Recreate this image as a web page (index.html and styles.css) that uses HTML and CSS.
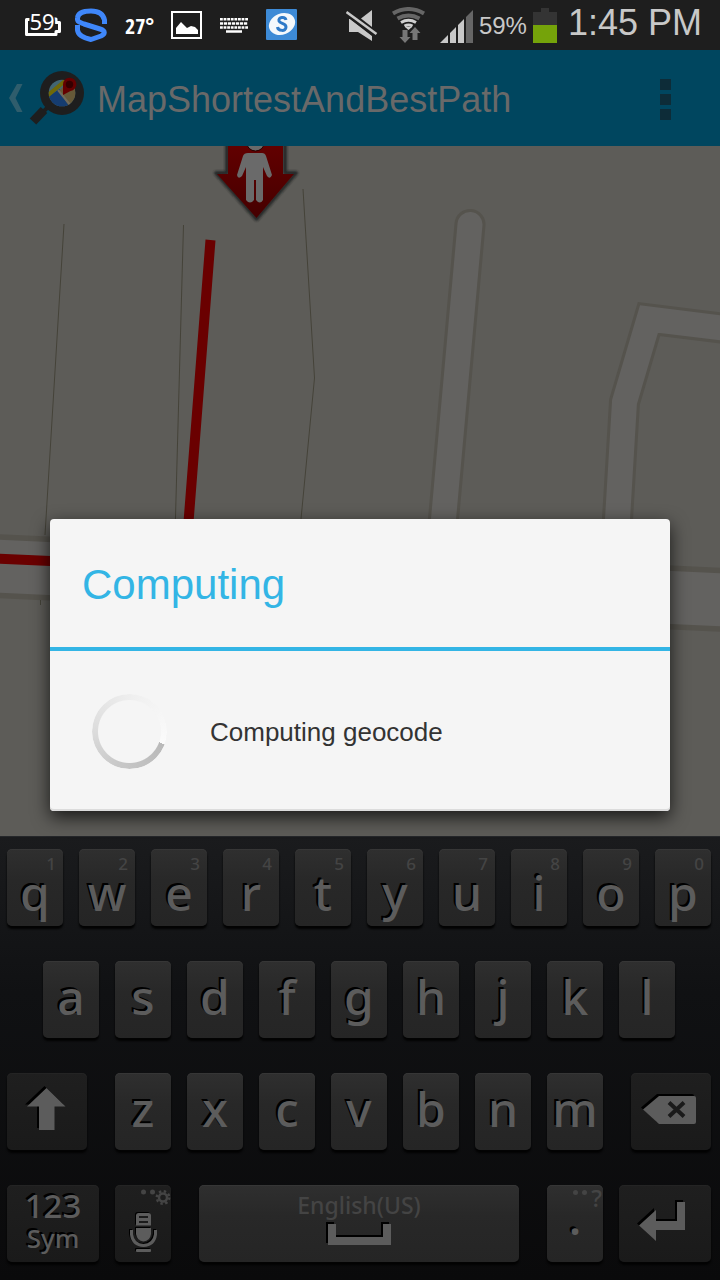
FILE: index.html
```html
<!DOCTYPE html>
<html lang="en">
<head>
<meta charset="utf-8">
<meta name="viewport" content="width=device-width, initial-scale=1">
<title>MapShortestAndBestPath</title>
<link rel="stylesheet" href="styles.css">
</head>
<body>
<div class="screen">
  <div class="status">
    <div class="status-group notifications">
      <svg width="36" height="36" viewBox="25 7 36 36" aria-hidden="true">
        <path d="M29.500 19.500h-3v15h29.500v-3h3.500v-9h-3.500v-3.500h-2.500" fill="none" stroke="#fff" stroke-width="3" stroke-linejoin="round"/>
        <text x="42" y="30" text-anchor="middle" class="battery-count">59</text>
      </svg>
      <svg width="34" height="36" viewBox="74 7 34 36" aria-hidden="true">
        <path d="M104.500 24V20C103 13 98 11 91 11C84 11 78 13 77.500 18C77 22 80 22.500 84 24L100 29C106 31 105 34 101 36L91 39.500C84 38 78 35 77.500 30V25" fill="none" stroke="#3f87fa" stroke-width="5" stroke-linejoin="round"/>
      </svg>
      <span class="temperature">27°</span>
      <svg width="32" height="36" viewBox="171 7 32 36" aria-hidden="true">
        <rect x="172" y="12" width="29" height="26" fill="none" stroke="#fff" stroke-width="2"/>
        <path d="M176 34v-6l5-6 6 6 4-2 4 1 3 3v4z" fill="#fff"/>
      </svg>
      <svg width="28" height="36" viewBox="221 7 28 36" aria-hidden="true">
        <g stroke="#fff" stroke-width="2.500">
          <path d="M221 19.200h28" stroke-dasharray="2.800 .8"/>
          <path d="M221 23.400h28" stroke-dasharray="3.200 .8"/>
          <path d="M221 27.500h28" stroke-dasharray="2.800 .8"/>
          <path d="M227 31.500h16"/>
        </g>
      </svg>
      <svg width="32" height="36" viewBox="266 7 32 36" aria-hidden="true">
        <rect x="267" y="9" width="31" height="31" rx="1" fill="#3d8ad6"/>
        <ellipse cx="283" cy="24" rx="13.500" ry="10.500" fill="#f4f8fc" transform="rotate(-22 283 24)"/>
        <path d="M287 20c-1-4-8-3-7 1 1 3 7 2 7 6 0 5-8 4-8.500 0" fill="none" stroke="#2f7ac8" stroke-width="3"/>
      </svg>
    </div>
    <div class="status-group system">
      <svg width="32" height="36" viewBox="346 7 32 36" aria-hidden="true">
        <path d="M372 10v17l-11-8.500z" fill="#c8c8c8"/>
        <path d="M349 19v13h9l14 9v-5L350 19z" fill="#c8c8c8"/>
        <path d="M348 15.500l28 21" stroke="#1e1e1e" stroke-width="3"/>
        <path d="M346.500 12l30 22" stroke="#c8c8c8" stroke-width="2.500"/>
      </svg>
      <svg width="36" height="36" viewBox="391 7 36 36" aria-hidden="true">
        <g fill="none" stroke="#666" stroke-width="4">
          <path d="M393 13.500q15.500-9 31 0"/><path d="M397.500 18.500q11-6 22 0"/>
        </g>
        <g fill="none" stroke="#d0d0d0" stroke-width="3">
          <path d="M401 22.500q7.500-4.500 15 0"/><path d="M404.500 26q4-2 8 0"/>
        </g>
        <path d="M405 27h7l-3.500 3z" fill="#d0d0d0"/>
        <path d="M402.500 30h5v7h3l-5.500 6-5.500-6h3zM412.500 40v-7h-3l5.500-6 5.500 6h-3v7z" fill="#777"/>
      </svg>
      <svg width="33" height="36" viewBox="440 7 33 36" aria-hidden="true">
        <path d="M440 43l8-8v8zM450 33l6-6v16h-6zM458 25l6-6v24h-6z" fill="#c8c8c8"/>
        <path d="M466 17l7-7v33h-7z" fill="#666"/>
      </svg>
      <span class="percent">59%</span>
      <svg width="24" height="36" viewBox="533 7 24 36" aria-hidden="true">
        <path d="M533 12h8V8h8v4h8v13h-24z" fill="#343434"/>
        <path d="M533 25h24v18h-24z" fill="#75a30a"/>
      </svg>
      <span class="clock">1:45 PM</span>
    </div>
  </div>

  <header class="action-bar">
    <button class="up" aria-label="Navigate up">
      <svg width="76" height="60" viewBox="8 69 76 60" aria-hidden="true">
        <path d="M17 84h5.500l-7 14 7 14H17L9 98z" fill="#2f5d6c"/>
        <path d="M44 110l-11 11.500" stroke="#1e1e1e" stroke-width="9"/>
        <path d="M50 105l-6 6" stroke="#1e1e1e" stroke-width="4"/>
        <circle cx="62" cy="93" r="22" fill="#1e1e1e"/>
        <clipPath id="lens"><circle cx="62" cy="93" r="13.300"/></clipPath>
        <g clip-path="url(#lens)">
          <path d="M48 79h28v28H48z" fill="#426673"/>
          <path d="M48 97l11-8 11 10 2 8H48z" fill="#153c70"/>
          <path d="M59 91l5-5 14-2v16l-9 6z" fill="#665938"/>
          <path d="M47 96l18-15" stroke="#6f6908" stroke-width="4"/>
          <path d="M58 90l13 16" stroke="#706b5d" stroke-width="2"/>
        </g>
        <path d="M63 95V84.500a6.700 6.700 0 1 1 7.500 6.500z" fill="#650000"/>
        <circle cx="69.500" cy="84.500" r="3.700" fill="#340000"/>
      </svg>
    </button>
    <h1 class="app-title">MapShortestAndBestPath</h1>
    <button class="overflow" aria-label="More options"><i></i><i></i><i></i></button>
  </header>

  <svg class="map" viewBox="0 146 720 690" preserveAspectRatio="xMidYMid slice" role="img" aria-label="Map">
    <defs>
      <linearGradient id="pin" x1="0" y1="0" x2="0" y2="1"><stop offset="0" stop-color="#680000"/><stop offset="1" stop-color="#450000"/></linearGradient>
      <filter id="soft" x="-20%" y="-20%" width="140%" height="140%"><feGaussianBlur stdDeviation="1"/></filter>
    </defs>
    <rect y="146" width="720" height="690" fill="#5d5c58"/>
    <g fill="none" stroke="#55534d">
      <path d="M470 224.500L443.500 519L438 586" stroke-width="31" stroke-linecap="round"/>
      <path d="M614 595L617.500 519L624.500 402L649 319L730 329" stroke-width="31"/>
      <path d="M-5 566L725 600" stroke-width="64"/>
    </g>
    <g fill="none" stroke="#636260">
      <path d="M470 224.500L443.500 519L438 586" stroke-width="25" stroke-linecap="round"/>
      <path d="M614 595L617.500 519L624.500 402L649 319L730 329" stroke-width="25"/>
      <path d="M-5 566L725 600" stroke-width="53"/>
    </g>
    <path d="M64 224L45 535M183.500 225L175 535M303 189L314.500 378L301 519M40.500 600v5" fill="none" stroke="#454339" stroke-width="1"/>
    <path d="M-5 558.500L185 567L210.500 240" fill="none" stroke="#6a0000" stroke-width="10"/>
    <path d="M227 130V173H216L256.500 219L296 173H285V130z" fill="none" stroke="#282a29" stroke-width="4" stroke-linejoin="round" filter="url(#soft)"/>
    <path d="M228 130V174H217L256.500 218L294 174H283V130z" fill="url(#pin)"/>
    <path d="M248 153h14q3 0 4 3l6 19q-2 5-5 1l-4-9v33q-3 5-7 0v-20h-2v20q-4 5-8 0v-33l-4 9q-4 4-5-1l6-19q1-3 5-3z" fill="#6a6a6a"/>
    <circle cx="255.500" cy="142" r="9" fill="#6a6a6a" stroke="#240000"/>
  </svg>

  <section class="keyboard" aria-label="Keyboard">
    <div class="row row-top">
      <button class="key"><sup>1</sup>q</button><button class="key"><sup>2</sup>w</button><button class="key"><sup>3</sup>e</button><button class="key"><sup>4</sup>r</button><button class="key"><sup>5</sup>t</button><button class="key"><sup>6</sup>y</button><button class="key"><sup>7</sup>u</button><button class="key"><sup>8</sup>i</button><button class="key"><sup>9</sup>o</button><button class="key"><sup>0</sup>p</button>
    </div>
    <div class="row row-home">
      <button class="key">a</button><button class="key">s</button><button class="key">d</button><button class="key">f</button><button class="key">g</button><button class="key">h</button><button class="key">j</button><button class="key">k</button><button class="key">l</button>
    </div>
    <div class="row row-shift">
      <button class="key dark shift" aria-label="Shift">
        <svg width="44" height="56" viewBox="25 1083 44 56" aria-hidden="true"><path d="M46.500 1087l19 18.500H54.500V1129H39V1105.500H27z"/></svg>
      </button>
      <button class="key">z</button><button class="key">x</button><button class="key">c</button><button class="key">v</button><button class="key">b</button><button class="key">n</button><button class="key">m</button>
      <button class="key dark delete" aria-label="Delete">
        <svg width="60" height="40" viewBox="641 1092 60 40" aria-hidden="true"><path d="M643 1109.500L659 1096H694q2 0 2 2V1122q0 2-2 2H659z"/><path class="cross" d="M669 1102.500l15 14M684 1102.500l-15 14"/></svg>
      </button>
    </div>
    <div class="row row-bottom">
      <button class="key dark symbols"><span class="digits">123</span><span class="sym">Sym</span></button>
      <button class="key dark" aria-label="Voice input">
        <svg class="plain" width="56" height="77" viewBox="115 1185 56 77" aria-hidden="true">
          <g class="faint"><circle cx="143.500" cy="1192" r="2.500"/><circle cx="152.500" cy="1192" r="2.500"/><circle cx="163" cy="1197.500" r="4" fill="none" stroke="#444" stroke-width="2.500"/><circle cx="163" cy="1197.500" r="6.200" fill="none" stroke="#444" stroke-width="2.500" stroke-dasharray="2.400 2.470"/></g>
          <g class="mic">
            <path d="M138.500 1213h10q2 0 2.500 2v10.500h-15V1215q.500-2 2.500-2z"/>
            <path class="slots" d="M139 1217h9M139 1222h9"/>
            <path d="M136 1228h15v6q-1 7-7.500 7.500Q137 1241 136 1234z"/>
            <path class="cup" d="M130 1231.500h1.500v3q1.500 10.500 12 11q10.500-.5 12-11v-3h1.500"/>
            <rect x="136" y="1249" width="15" height="3" rx="1"/>
          </g>
        </svg>
      </button>
      <button class="key space"><span class="language">English(US)</span>
        <svg width="68" height="26" viewBox="325 1223 68 26" aria-hidden="true"><path d="M328 1226h8v13h47v-13h8v21h-63z"/></svg>
      </button>
      <button class="key period"><span class="more" aria-hidden="true"><i></i><i></i>?</span>.</button>
      <button class="key dark" aria-label="Enter">
        <svg width="56" height="50" viewBox="638 1198 56 50" aria-hidden="true"><path d="M640 1224.500L657 1209v11h21V1201h8v28H657v11z"/></svg>
      </button>
    </div>
  </section>

  <div class="dialog-layer">
    <div class="dialog" role="dialog" aria-labelledby="dialog-title">
      <h2 class="dialog-title" id="dialog-title">Computing</h2>
      <div class="dialog-body">
        <div class="spinner" role="progressbar" aria-label="Computing geocode"></div>
        <p class="message">Computing geocode</p>
      </div>
    </div>
  </div>
</div>
</body>
</html>
```

FILE: styles.css
```css
* { box-sizing: border-box; }

body {
  margin: 0;
  background: #0a0a0b;
  font-family: "Liberation Sans", Arial, sans-serif;
}

button {
  border: 0;
  padding: 0;
  background: none;
  font: inherit;
}

svg { display: block; flex: none; }

.screen {
  position: relative;
  display: flex;
  flex-direction: column;
  min-height: 100vh;
}

/* Status bar */
.status {
  display: flex;
  justify-content: space-between;
  align-items: center;
  height: 50px;
  padding: 0 18px 0 25px;
  background: #1e1e1e;
  color: #c8c8c8;
}
.status-group { display: flex; align-items: center; }
.notifications { gap: 17px; }
.notifications svg:nth-child(2) { margin-left: -4px; }
.system { gap: 6px; white-space: nowrap; }
.system svg + svg { margin-left: 7px; }
.battery-count {
  fill: #fff;
  stroke: #1e1e1e;
  stroke-width: 3px;
  paint-order: stroke;
  font-family: "Noto Sans", sans-serif;
  font-size: 22px;
}
.temperature {
  color: #fff;
  font-family: "Liberation Sans Narrow", "Open Sans Condensed", "Liberation Sans", sans-serif;
  font-weight: 700;
  font-size: 22px;
}
.percent { font-size: 24px; line-height: 36px; padding-top: 2px; }
.clock { font-size: 36px; line-height: 40px; padding-left: 5px; padding-bottom: 4px; }

/* Action bar */
.action-bar {
  display: flex;
  align-items: center;
  height: 96px;
  padding: 2px 38px 0 8px;
  background: #00465f;
  color: #696969;
}
.app-title {
  flex: 1;
  margin: 0 0 0 13px;
  padding-top: 2px;
  font-size: 36px;
  line-height: 48px;
  font-weight: 400;
}
.overflow {
  display: flex;
  flex-direction: column;
  align-items: center;
  gap: 4px;
  width: 34px;
}
.overflow i { width: 11px; height: 11px; background: #0d2c38; }

.map { display: block; flex: 1 1 0; width: 100%; min-height: 0; }

/* Keyboard */
.keyboard {
  display: grid;
  gap: 35px;
  padding: 12px 9px 18px 7px;
  border-top: 1px solid #25272a;
  background: linear-gradient(#1a1b1d, #101113 35%, #0a0a0b);
  font-family: "Noto Sans", sans-serif;
  color: #5c5c5c;
}
.row { display: grid; gap: 16px; height: 77px; }
.row-top { grid-template-columns: repeat(10, 1fr); }
.row-home { grid-template-columns: repeat(9, 1fr); padding: 0 36px; }
.row-shift { grid-template-columns: 92fr repeat(7, 56fr) 92fr; }
.row-bottom { grid-template-columns: 92fr 56fr 344fr 56fr 92fr; }

.key {
  position: relative;
  display: flex;
  justify-content: center;
  align-items: center;
  min-width: 0;
  padding-bottom: 6px;
  border-radius: 5px;
  background: linear-gradient(#2f2f2f, #282828 40%, #252525);
  box-shadow: inset 0 1px 0 #363636, 0 3px 2px #030303;
  color: #5c5c5c;
  font-weight: 500;
  font-size: 48px;
  line-height: 48px;
  text-shadow: -2px -2px 0 #000;
}
.row-top .key { padding: 10px 0 0; }
.key.dark {
  padding: 0;
  background: linear-gradient(#1f1f1f, #1a1a1a);
  box-shadow: inset 0 1px 0 #242424, 0 3px 2px #030303;
}
.key sup {
  position: absolute;
  top: 5px;
  right: 7px;
  color: #444;
  font-size: 17px;
  line-height: 20px;
  text-shadow: none;
}
.key svg { fill: #5c5c5c; filter: drop-shadow(-2px -2px 0 #000); }
.key .plain { filter: none; }
.key .mic { filter: drop-shadow(-1px -1px 0 #000); }
.key .cross { fill: none; stroke: #1a1a1a; stroke-width: 4; }
.key .slots { fill: none; stroke: #1b1b1b; stroke-width: 2; }
.key .cup { fill: none; stroke: #5c5c5c; stroke-width: 3; }
.key .faint { fill: #444; }
.shift { margin-right: 12px; }
.delete { margin-left: 12px; }
.symbols { flex-direction: column; }
.key .digits { margin-top: -6px; font-size: 33px; line-height: 34px; }
.key .sym { font-size: 26px; line-height: 30px; }
.space { flex-direction: column; margin: 0 12px; padding-bottom: 10px; }
.language {
  margin-bottom: 2px;
  color: #444;
  font-weight: 500;
  font-size: 23px;
  line-height: 28px;
  text-shadow: none;
}
.period { padding-bottom: 14px; }
.more {
  position: absolute;
  top: 2px;
  right: 1px;
  display: flex;
  gap: 4px;
  color: #444;
  font-size: 24px;
  line-height: 22px;
  text-shadow: none;
}
.more i { width: 5px; height: 5px; margin-top: 3px; border-radius: 50%; background: #444; }

/* Progress dialog */
.dialog-layer {
  position: absolute;
  inset: 50px 0 0;
  display: flex;
  justify-content: center;
  align-items: center;
  padding: 0 50px;
}
.dialog {
  width: 100%;
  border-radius: 4px;
  background: #f5f5f5;
  box-shadow: inset 0 -2px 0 #dcdcdc, 0 6px 18px rgba(0, 0, 0, 0.75);
}
.dialog-title {
  margin: 0;
  padding: 42px 32px 38px;
  border-bottom: 4px solid #33b5e5;
  color: #33b5e5;
  font-size: 42px;
  line-height: 48px;
  font-weight: 400;
}
.dialog-body {
  display: flex;
  align-items: center;
  gap: 43px;
  min-height: 160px;
  padding: 32px 42px;
}
.spinner {
  flex: none;
  width: 75px;
  height: 75px;
  border-radius: 50%;
  background: conic-gradient(from 110deg, #b9b9b9, #c8c8c8 90deg, #dedede 170deg, #f0f0f0 260deg, #fbfbfb);
  mask: radial-gradient(circle, transparent 31px, #000 32px);
}
.message { margin: 0; padding-top: 2px; color: #333; font-size: 26px; line-height: 32px; }
```
